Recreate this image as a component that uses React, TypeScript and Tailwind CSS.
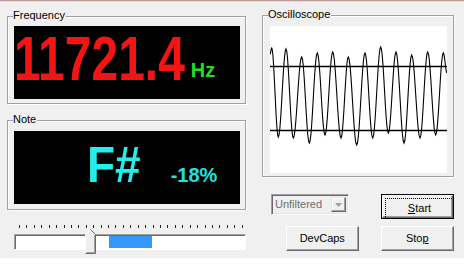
import React from "react";

const peaks: [number, number][] = [
	[1.7, 22], [16, 23], [31.7, 31], [47.3, 27], [62.7, 26], [78.3, 31],
	[95, 27], [110.7, 21], [126, 26], [141.7, 29], [157.7, 26], [173.3, 27],
];
const troughs: [number, number][] = [
	[8.3, 111], [23.3, 112], [39.3, 117], [55, 109], [71, 112], [86.7, 119],
	[102.7, 112], [118.3, 107], [134, 117], [150, 112], [165.7, 109],
];

const wavePath = () => {
	const pts: [number, number][] = [[0, 28]];
	for (let i = 0; i < peaks.length; i++) {
		pts.push(peaks[i]);
		if (troughs[i]) pts.push(troughs[i]);
	}
	pts.push([177, 47]);
	let d = `M ${pts[0][0]} ${pts[0][1]}`;
	for (let i = 1; i < pts.length; i++) {
		const [x0, y0] = pts[i - 1];
		const [x1, y1] = pts[i];
		for (let t = 0.1; t <= 1.001; t += 0.1) {
			const x = x0 + (x1 - x0) * t;
			const y = y0 + (y1 - y0) * (1 - Math.cos(Math.PI * t)) / 2;
			d += ` L ${x.toFixed(2)} ${y.toFixed(2)}`;
		}
	}
	return d;
};

const GroupBox = ({
	label,
	className,
	children,
}: {
	label: string;
	className: string;
	children: React.ReactNode;
}) => (
	<div
		className={`relative border border-[#a0a0a0] shadow-[inset_1px_1px_0_#ffffff,1px_1px_0_#ffffff] ${className}`}
	>
		<span className="absolute left-[5px] top-[-8px] z-10 bg-[#f0f0f0] pr-px text-[11px] leading-[13px] text-black">
			{label}
		</span>
		{children}
	</div>
);

const Button = ({
	children,
	isDefault,
	className,
}: {
	children: React.ReactNode;
	isDefault?: boolean;
	className: string;
}) => (
	<div className={`${isDefault ? "border border-black" : ""} ${className}`}>
		<div className="h-full w-full border border-t-white border-l-white border-r-[#696969] border-b-[#696969] bg-[#f0f0f0] shadow-[inset_-1px_-1px_0_#a0a0a0]">
			<div
				className={`flex h-full w-full items-center justify-center text-[11px] text-black ${
					isDefault ? "m-[2px] h-[calc(100%-5px)] w-[calc(100%-5px)] border border-dotted border-black" : ""
				}`}
			>
				{children}
			</div>
		</div>
	</div>
);

export default function App() {
	const ticks = Array.from({ length: 31 });
	return (
		<div
			className="h-[275px] w-[464px] bg-white"
			style={{ fontFamily: '"Liberation Sans", Arial, sans-serif' }}
		>
			<div className="h-[258px] bg-[#f0f0f0]">
				<div className="h-px bg-[#c09a96]" />
				<div className="h-px bg-[#ead8d6]" />
				<div className="flex">
					{/* left column */}
					<div className="ml-[7px] flex w-[239px] flex-col">
						<GroupBox label="Frequency" className="mt-[14px] h-[88px] pl-[6px] pt-[9px]">
							<div className="relative flex h-[73px] w-[226px] items-end bg-black">
								<span className="mb-[11px] inline-block origin-bottom scale-y-[1.3] text-[48px] font-bold leading-[44px] text-[#f41414]">
									11721.4
								</span>
								<span className="mb-[19px] ml-[6px] text-[20px] font-bold leading-none text-[#22dd22]">
									Hz
								</span>
							</div>
						</GroupBox>
						<GroupBox label="Note" className="mt-[16px] h-[90px] pl-[6px] pt-[10px]">
							<div className="flex h-[73px] w-[226px] items-end bg-black">
								<span className="mb-[14px] ml-[73px] inline-block origin-bottom scale-y-[1.1] text-[46px] font-bold leading-none text-[#22eeee]">
									F#
								</span>
								<span className="mb-[19px] ml-[30px] text-[20px] font-bold leading-none text-[#22e0e0]">
									-18%
								</span>
							</div>
						</GroupBox>
						{/* trackbar */}
						<div className="relative mt-[15px]">
							<div className="ml-[12px] flex h-[3px] w-[224px] justify-between">
								{ticks.map((_, i) => (
									<div key={i} className="h-[3px] w-px bg-[#202020]" />
								))}
							</div>
							<div className="mt-[6px] ml-[7px] h-[16px] w-[232px] border border-t-[#a0a0a0] border-l-[#a0a0a0] border-r-white border-b-white bg-white shadow-[inset_1px_1px_0_#696969,-1px_-1px_0_#f0f0f0]">
								<div className="ml-[94px] mt-[1px] h-[12px] w-[43px] bg-[#3399ff]" />
							</div>
							<svg
								className="absolute left-[78px] top-[4px]"
								width="12"
								height="25"
								viewBox="0 0 12 25"
							>
								<polygon
									points="0.5,24.5 0.5,5.5 5.5,0.5 10.5,5.5 10.5,24.5"
									fill="#eeeeee"
									stroke="#ffffff"
								/>
								<polyline
									points="5.5,0.5 10.5,5.5 10.5,24.5 0.5,24.5"
									fill="none"
									stroke="#696969"
								/>
								<polyline
									points="9.5,6 9.5,23.5 1.5,23.5"
									fill="none"
									stroke="#a0a0a0"
								/>
							</svg>
						</div>
					</div>
					{/* right column */}
					<div className="ml-[16px] flex w-[192px] flex-col">
						<GroupBox label="Oscilloscope" className="mt-[13px] h-[162px] pl-[7px] pt-[10px]">
							<div className="h-[147px] w-[177px] bg-white">
								<svg width="177" height="147" viewBox="0 0 177 147">
									<line x1="0" y1="40.5" x2="177" y2="40.5" stroke="#000" strokeWidth="1.5" />
									<line x1="0" y1="104.5" x2="177" y2="104.5" stroke="#000" strokeWidth="1.5" />
									<path d={wavePath()} fill="none" stroke="#000" strokeWidth="1.1" />
								</svg>
							</div>
						</GroupBox>
						<div className="mt-[17px] flex">
							<div className="ml-[9px] flex h-[21px] w-[79px] border border-t-[#a0a0a0] border-l-[#a0a0a0] border-r-white border-b-white bg-[#f0f0f0] shadow-[inset_1px_1px_0_#696969,inset_-1px_-1px_0_#e3e3e3]">
								<span className="ml-[3px] mt-[2px] flex-1 text-[11px] leading-[14px] text-[#6d6d6d]">
									Unfiltered
								</span>
								<div className="mr-[2px] mt-[2px] flex h-[15px] w-[15px] items-center justify-center border border-t-[#e3e3e3] border-l-[#e3e3e3] border-r-[#696969] border-b-[#696969] bg-[#f0f0f0] shadow-[inset_-1px_-1px_0_#a0a0a0,inset_1px_1px_0_#ffffff]">
									<svg width="7" height="4" viewBox="0 0 7 4">
										<polygon points="0,0 7,0 3.5,4" fill="#a0a0a0" />
									</svg>
								</div>
							</div>
							<Button isDefault className="ml-[32px] h-[25px] w-[74px]">
								<span>
									<u>S</u>tart
								</span>
							</Button>
						</div>
						<div className="mt-[7px] flex">
							<Button className="ml-[24px] h-[25px] w-[74px]">DevCaps</Button>
							<Button className="ml-[22px] h-[25px] w-[75px]">
								<span>
									Sto<u>p</u>
								</span>
							</Button>
						</div>
					</div>
				</div>
			</div>
		</div>
	);
}
